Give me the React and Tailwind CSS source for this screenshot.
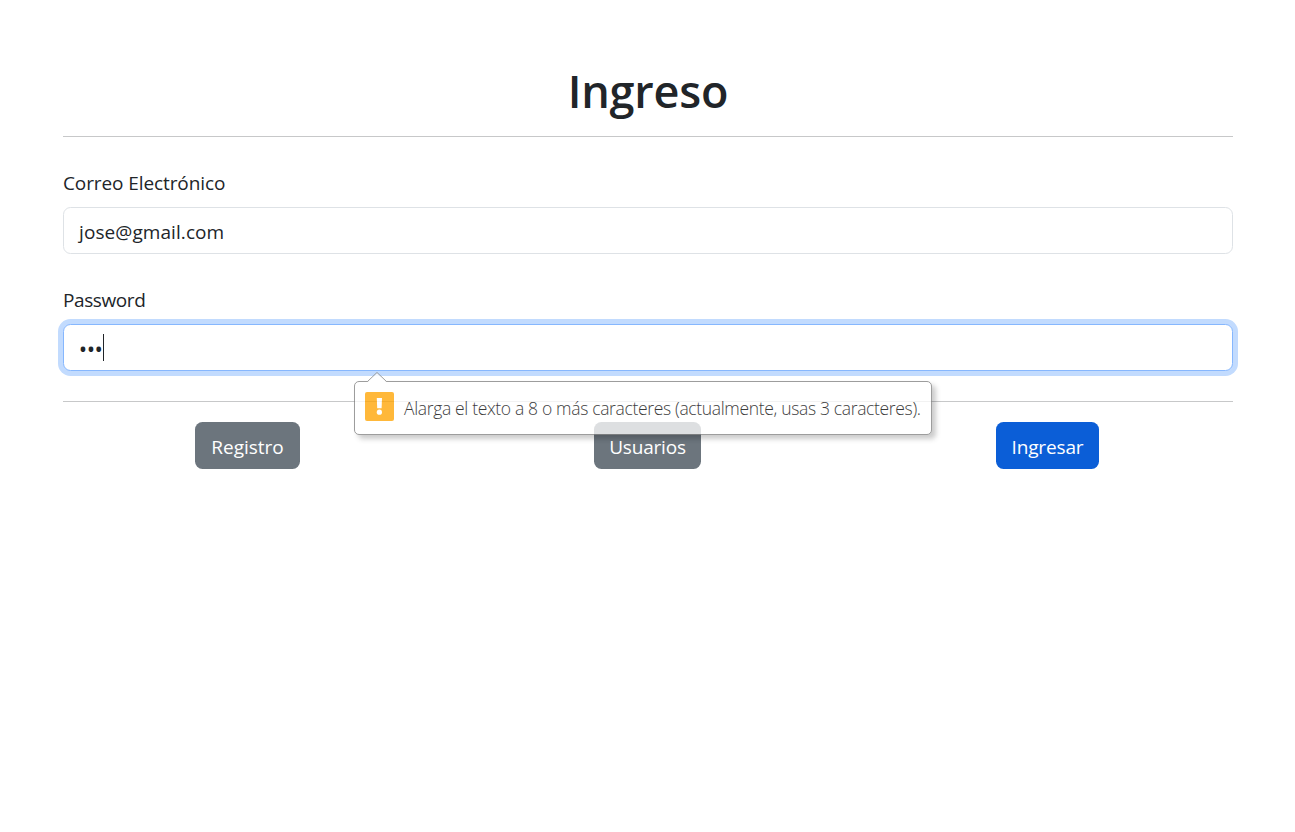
import React from "react";

function Field({ label, focused, children }) {
  return (
    <div className="flex flex-col">
      <label className="h-[30px] text-[19px] leading-[30px] tracking-[-0.1px] whitespace-nowrap">{label}</label>
      <div
        className={
          "mt-[9px] flex h-[47px] items-center rounded-[7.5px] border bg-white px-[15px] text-[19px] " +
          (focused ? "border-[#86b7fe] shadow-[0_0_0_5px_#c2dbfe]" : "border-[#dee2e6]")
        }
      >
        {children}
      </div>
    </div>
  );
}

function Tooltip() {
  return (
    <div className="absolute left-[354px] top-[372px] h-[63px] w-[578px] opacity-[.77]">
      <div className="absolute left-0 top-[9px] flex h-[54px] w-[578px] items-center rounded-[5px] border border-[#808080] bg-white pl-[10px] shadow-[4px_4px_5px_rgba(0,0,0,0.26)]">
        <svg className="-mt-[4px] shrink-0" width="29" height="29" viewBox="0 0 29 29">
          <rect width="29" height="29" rx="2" fill="#ffa400" />
          <path d="M11.8 6h5.2l-.4 10.2h-4.4z" fill="#fff" />
          <circle cx="14.4" cy="20.2" r="2.6" fill="#fff" />
        </svg>
        <span className="ml-[10px] text-[17.5px] font-light tracking-[-0.34px] whitespace-nowrap text-black">
          Alarga el texto a 8 o más caracteres (actualmente, usas 3 caracteres).
        </span>
      </div>
      <svg className="absolute left-[12px] top-0" width="22" height="11" viewBox="0 0 22 11">
        <path d="M1.5 10 11 .5 20.5 10V11H1.5z" fill="#fff" />
        <path d="M1.5 9.5 11 .5 20.5 9.5" fill="none" stroke="#808080" />
      </svg>
    </div>
  );
}

export default function App() {
  return (
    <main className="relative h-[832px] w-[1295px] overflow-hidden bg-white px-[63px] pt-[61px] font-['Open_Sans','Noto_Sans',sans-serif] text-[#212529]">
      <form className="w-[1170px]">
        <h1 className="h-[60px] text-center text-[45px] leading-[60px] font-semibold tracking-[-0.2px]">Ingreso</h1>
        <hr className="mt-[15px] border-t border-[#c7c8c9]" />
        <div className="mt-[31px]">
          <Field label="Correo Electrónico">
            <span className="relative top-[2px] tracking-[0.08px]">jose@gmail.com</span>
          </Field>
        </div>
        <div className="mt-[31px]">
          <Field focused label={<span className="tracking-[-0.4px]">Password</span>}>
            <span className="relative top-[2px] font-['Noto_Sans',sans-serif] text-[21px] leading-none">•••</span>
            <span className="h-[27px] w-px bg-[#212529]" />
          </Field>
        </div>
        <hr className="mt-[30px] border-t border-[#c7c8c9]" />
        <div className="mt-5 flex h-[47px] text-[19px] text-white">
          <button type="button" className="ml-[132px] h-[47px] w-[105px] rounded-[7.5px] bg-[#6c757d] pt-[3px]">Registro</button>
          <button type="button" className="ml-[294px] h-[47px] w-[107px] rounded-[7.5px] bg-[#6c757d] pt-[3px] tracking-[-0.2px]">Usuarios</button>
          <button type="button" className="ml-[295px] h-[47px] w-[103px] rounded-[7.5px] bg-[#0b5ed7] pt-[3px] tracking-[-0.15px]">Ingresar</button>
        </div>
      </form>
      <Tooltip />
    </main>
  );
}
